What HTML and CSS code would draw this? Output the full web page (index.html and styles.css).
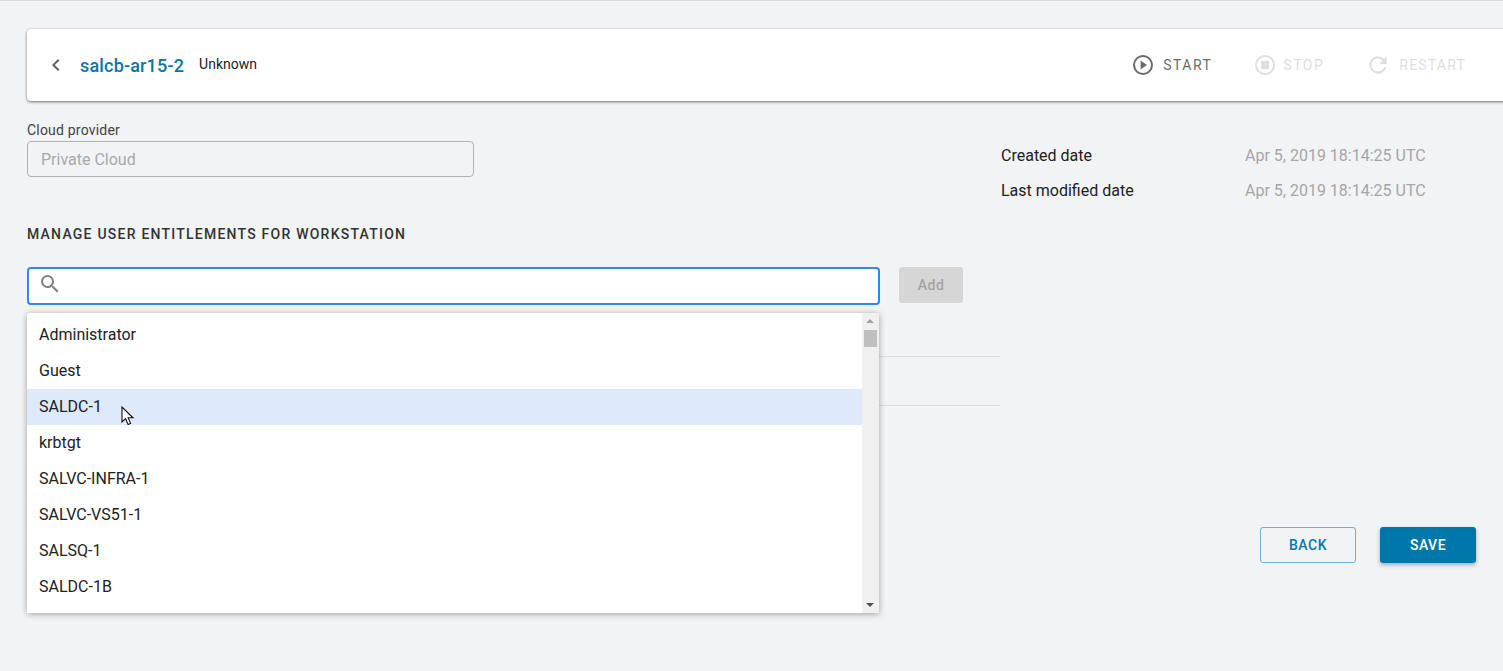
FILE: index.html
```html
<!DOCTYPE html>
<html lang="en">
<head>
    <meta charset="UTF-8">
    <title>salcb-ar15-2</title>
    <link rel="stylesheet" href="styles.css">
</head>
<body>
    <div class="page">
        <header class="card">
            <svg class="back-icon" width="24" height="24" viewBox="0 0 24 24"><path d="M15.4 7.4 14 6l-6 6 6 6 1.4-1.4L10.8 12z"/></svg>
            <h1>salcb-ar15-2</h1>
            <span class="status">Unknown</span>
            <nav class="actions">
                <a class="action action-start">
                    <svg width="22" height="22" viewBox="0 0 22 22"><circle cx="11" cy="11" r="9" fill="none" stroke="currentColor" stroke-width="2"/><path d="M8.6 6.6 15 11l-6.4 4.4z" fill="currentColor"/></svg>
                    START
                </a>
                <a class="action action-stop">
                    <svg width="22" height="22" viewBox="0 0 22 22"><circle cx="11" cy="11" r="9" fill="none" stroke="currentColor" stroke-width="2"/><rect x="7" y="7" width="8" height="8" fill="currentColor"/></svg>
                    STOP
                </a>
                <a class="action action-restart">
                    <svg width="26" height="26" viewBox="0 0 24 24"><path d="M17.65 6.35A7.96 7.96 0 0 0 12 4a8 8 0 1 0 7.73 10h-2.08A6 6 0 1 1 12 6c1.66 0 3.14.69 4.22 1.78L13 11h7V4z" fill="currentColor"/></svg>
                    RESTART
                </a>
            </nav>
        </header>

        <section class="info">
            <div class="provider">
                <label class="field-label">Cloud provider</label>
                <div class="readonly-input">Private Cloud</div>
            </div>
            <dl class="dates">
                <div class="date-row"><dt>Created date</dt><dd>Apr 5, 2019 18:14:25 UTC</dd></div>
                <div class="date-row"><dt>Last modified date</dt><dd>Apr 5, 2019 18:14:25 UTC</dd></div>
            </dl>
        </section>

        <h2>MANAGE USER ENTITLEMENTS FOR WORKSTATION</h2>

        <div class="search-row">
            <div class="search-wrap">
                <div class="search-box">
                    <svg width="24" height="24" viewBox="0 0 24 24"><path d="M15.5 14h-.79l-.28-.27A6.47 6.47 0 0 0 16 9.5 6.5 6.5 0 1 0 9.5 16c1.61 0 3.09-.59 4.23-1.57l.27.28v.79l5 4.99L20.49 19zm-6 0C7.01 14 5 11.99 5 9.5S7.01 5 9.5 5 14 7.01 14 9.5 11.99 14 9.5 14z"/></svg>
                </div>
                <div class="dropdown">
                    <ul class="options">
                        <li>Administrator</li>
                        <li>Guest</li>
                        <li class="active">SALDC-1</li>
                        <li>krbtgt</li>
                        <li>SALVC-INFRA-1</li>
                        <li>SALVC-VS51-1</li>
                        <li>SALSQ-1</li>
                        <li>SALDC-1B</li>
                    </ul>
                    <div class="scrollbar">
                        <span class="arrow-up"></span>
                        <span class="thumb"></span>
                        <span class="arrow-down"></span>
                    </div>
                    <svg class="cursor" width="14" height="20" viewBox="0 0 14 20"><path d="M1 1v15l3.6-3.3 2.5 5.8 2.5-1.1-2.5-5.6H12z" fill="#fff" stroke="#111" stroke-width="1.1"/></svg>
                </div>
            </div>
            <button class="add-btn">Add</button>
        </div>

        <div class="table-lines">
            <div class="table-line"></div>
            <div class="table-line"></div>
        </div>

        <div class="footer-buttons">
            <button class="btn btn-back">BACK</button>
            <button class="btn btn-save">SAVE</button>
        </div>
    </div>
</body>
</html>
```
FILE: styles.css
```css
html, body {
    margin: 0;
    padding: 0;
    height: 100%;
    overflow: hidden;
}

body {
    font-family: Roboto, "Liberation Sans", sans-serif;
    background: #f2f3f5;
    color: #212121;
    border-top: 1px solid #dcdcdc;
    box-sizing: border-box;
}

.page {
    padding: 28px 27px 0 27px;
}

.card {
    display: flex;
    align-items: center;
    height: 72px;
    margin-right: -60px;
    padding-left: 17px;
    background: #fff;
    border-radius: 4px;
    box-shadow: 0 1px 3px rgba(0, 0, 0, 0.55);
}

.back-icon {
    fill: #616161;
    flex: none;
}

h1 {
    margin: 0 0 0 12px;
    font-size: 18px;
    font-weight: 500;
    letter-spacing: 0.17px;
    color: #0b76a5;
}

.status {
    margin-left: 15px;
    margin-top: -2px;
    font-size: 14px;
    color: #212121;
}

.actions {
    display: flex;
    align-items: center;
    margin-left: auto;
    margin-right: 70px;
    gap: 43px;
}

.action {
    display: flex;
    align-items: center;
    gap: 9px;
    font-size: 14px;
    letter-spacing: 1.5px;
}

.action-start {
    color: #6b6b6b;
}

.action-stop,
.action-restart {
    color: #dedede;
}

.action-stop {
    gap: 7px;
    margin-left: -1px;
}

.action-restart {
    gap: 8px;
    margin-left: -2px;
    letter-spacing: 1.2px;
}

.info {
    display: flex;
    margin-top: 21px;
}

.provider {
    width: 447px;
}

.field-label {
    display: block;
    font-size: 14px;
    line-height: 16px;
    letter-spacing: 0.2px;
    color: #424242;
}

.readonly-input {
    box-sizing: border-box;
    height: 36px;
    margin-top: 3px;
    padding-left: 13px;
    border: 1px solid #b0b0b0;
    border-radius: 4px;
    font-size: 16px;
    line-height: 35px;
    color: #a8a8a8;
}

.dates {
    margin: 24px 0 0 527px;
    font-size: 16px;
}

.date-row {
    display: flex;
    height: 35px;
    line-height: 19px;
}

.date-row dt {
    width: 244px;
    color: #212121;
}

.date-row dd {
    margin: 0;
    color: #a6a6a6;
}

h2 {
    margin: 0;
    margin-top: 10px;
    font-size: 14px;
    line-height: 16px;
    font-weight: 500;
    letter-spacing: 1.23px;
    color: #333;
}

.search-row {
    display: flex;
    align-items: flex-start;
    margin-top: 25px;
}

.search-wrap {
    position: relative;
    width: 853px;
    z-index: 2;
}

.search-box {
    box-sizing: border-box;
    display: flex;
    align-items: center;
    height: 38px;
    padding-left: 9px;
    background: #fff;
    border: 2px solid #2f86f6;
    border-radius: 4px;
}

.search-box svg {
    fill: #808080;
    margin-bottom: 5px;
}

.dropdown {
    position: absolute;
    top: 46px;
    left: 0;
    width: 852px;
    height: 300px;
    display: flex;
    background: #fff;
    border-radius: 3px 3px 0 0;
    box-shadow: 0 1px 6px rgba(0, 0, 0, 0.35);
    overflow: hidden;
}

.options {
    flex: 1;
    margin: 0;
    padding: 4px 0 0;
    list-style: none;
}

.options li {
    height: 36px;
    padding-left: 12px;
    font-size: 16px;
    line-height: 36px;
    color: #212121;
}

.options li.active {
    background: #dee9fb;
}

.scrollbar {
    position: relative;
    width: 17px;
    background: #f0f0f0;
}

.thumb {
    position: absolute;
    top: 17px;
    left: 2px;
    width: 13px;
    height: 17px;
    background: #bfbfbf;
}

.arrow-up,
.arrow-down {
    position: absolute;
    left: 4px;
    width: 0;
    height: 0;
    border-left: 4px solid transparent;
    border-right: 4px solid transparent;
}

.arrow-up {
    top: 6px;
    border-bottom: 4px solid #a3a3a3;
}

.arrow-down {
    bottom: 6px;
    border-top: 4px solid #505050;
}

.cursor {
    position: absolute;
    top: 93px;
    left: 94px;
}

.add-btn {
    width: 64px;
    height: 36px;
    margin-left: 19px;
    padding: 0;
    border: none;
    border-radius: 3px;
    background: #d6d6d6;
    font-family: inherit;
    font-size: 14px;
    font-weight: 500;
    letter-spacing: 0.5px;
    color: #a4a4a4;
}

.table-lines {
    width: 973px;
    margin-top: 51px;
}

.table-line {
    height: 1px;
    background: #dcdcdc;
    margin-bottom: 48px;
}

.footer-buttons {
    display: flex;
    justify-content: flex-end;
    gap: 24px;
    margin-top: 121px;
}

.btn {
    box-sizing: border-box;
    width: 96px;
    height: 36px;
    padding: 0;
    border-radius: 3px;
    font-family: inherit;
    font-size: 14px;
    font-weight: 500;
    letter-spacing: 0.5px;
}

.btn-back {
    background: transparent;
    border: 1px solid #6fb0d0;
    color: #0b76a5;
}

.btn-save {
    background: #0077aa;
    border: none;
    color: #fff;
    box-shadow: 0 2px 4px rgba(0, 0, 0, 0.3);
}
```
